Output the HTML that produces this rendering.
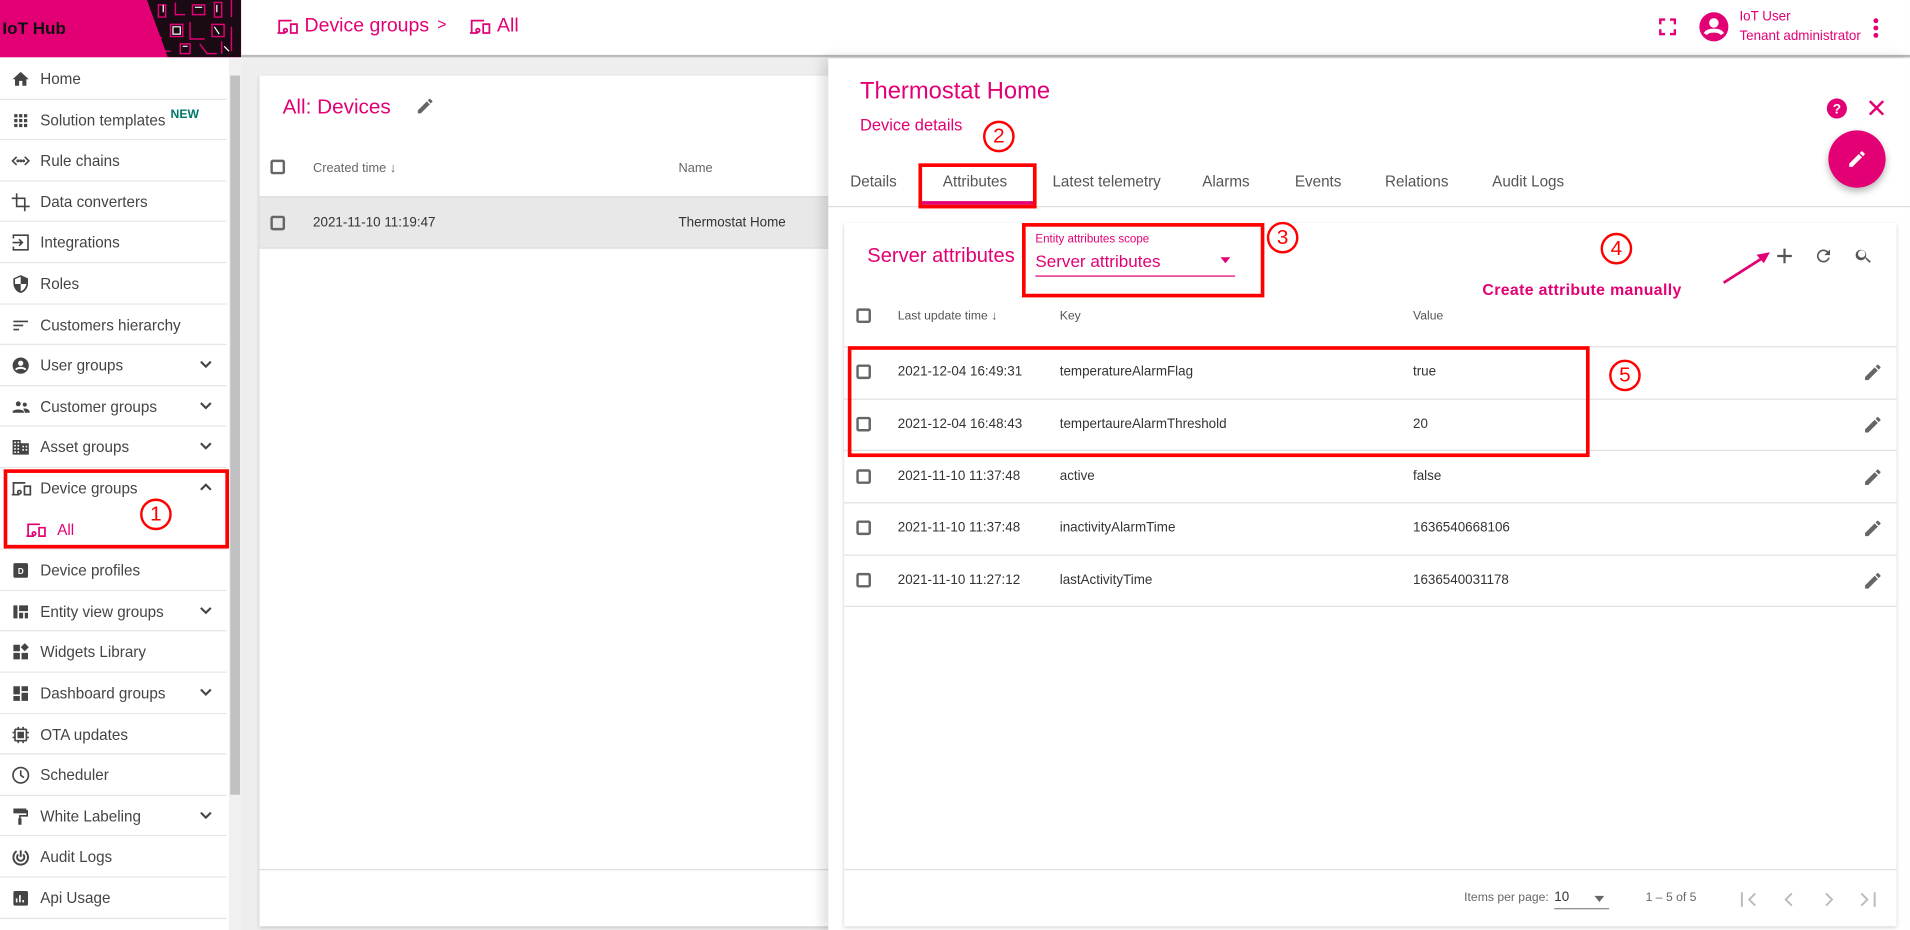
<!DOCTYPE html>
<html><head><meta charset="utf-8"><style>
*{box-sizing:border-box;margin:0;padding:0}
html,body{width:1910px;height:930px;overflow:hidden;background:#fff}
#w{width:1568px;height:763px;transform:scale(1.2181,1.2189);transform-origin:0 0;position:relative;font-family:"Liberation Sans",sans-serif;color:#333;background:#eee}
.a{position:absolute;white-space:nowrap}
.pk{color:#e20074}
.mi{position:absolute;left:0;width:186px;height:33.6px;border-bottom:1px solid #e4e4e4;background:#fff;font-size:12.5px;color:#444}
.mi span{position:absolute;left:33px;top:10px}
.mi svg{position:absolute;left:9px;top:9px}
.mi .chev{position:absolute;left:162px;top:9px}
.tb{font-size:12.5px;color:#555;position:absolute;top:142px}
.rl{position:absolute;left:693px;width:864px;height:1px;background:#e0e0e0}
.cb{position:absolute;width:12px;height:12px;border:2px solid #666;border-radius:2px}
.rt{position:absolute;font-size:11px;color:#333}
.rb{position:absolute;border:3px solid #f00}
.cir{position:absolute;width:26px;height:26px;border:2.5px solid #f00;border-radius:50%;color:#f00;font-size:17px;text-align:center;line-height:21px}
</style></head><body><div id="w">
<!-- sidebar -->
<div class="a" style="left:0;top:0;width:198px;height:763px;background:#fff"></div>
<div class="a" style="left:0;top:0;width:198px;height:47px;background:#e20074;overflow:hidden">
<div class="a" style="left:112px;top:0;width:86px;height:47px;background:#1a0a14;clip-path:polygon(10% 0,100% 0,100% 100%,30% 100%,22% 60%)"></div>
<svg class="a" style="left:120px;top:0" width="78" height="47"><g stroke="#e20074" fill="none" stroke-width="1.2"><path d="M10 4h6v10h-6zM24 2v10h8M38 4h10v8H38zM56 2h6v12h-6zM70 0v14M20 20h10v10H20zM36 18v14h12M54 20h10v10H54zM12 30v12h8M28 36h8v8h-8zM44 36l6 8h8M62 34v10M70 22v20"/></g><g stroke="#fff" fill="none" stroke-width="1"><path d="M14 4v6M40 6h6M58 4v6M22 22h6v6h-6zM56 22l4 6M30 38h4M64 38l4 4"/></g></svg>
<div class="a" style="left:2px;top:15px;font-size:14px;font-weight:bold;color:#111">IoT Hub</div></div>
<div class="a" style="left:188px;top:48px;width:10px;height:715px;background:#f0f0f0"></div>
<div class="a" style="left:189px;top:62px;width:8px;height:590px;background:#c1c1c1"></div>
<div class="a" style="left:198px;top:48px;width:14px;height:715px;background:#eee"></div>

<div class="mi" style="top:48px"><svg width="16" height="16" viewBox="0 0 24 24"><path d="M10 20v-6h4v6h5v-8h3L12 3 2 12h3v8z" fill="#444"/></svg><span>Home</span></div>
<div class="mi" style="top:81.6px"><svg width="16" height="16" viewBox="0 0 24 24" fill="#444"><path d="M4 4h4v4H4zM10 4h4v4h-4zM16 4h4v4h-4zM4 10h4v4H4zM10 10h4v4h-4zM16 10h4v4h-4zM4 16h4v4H4zM10 16h4v4h-4zM16 16h4v4h-4z"/></svg><span>Solution templates</span><b class="a" style="left:140px;top:7px;font-size:10px;color:#00796b">NEW</b></div>
<div class="mi" style="top:115.2px"><svg width="16" height="16" viewBox="0 0 24 24" fill="none" stroke="#444" stroke-width="2"><path d="M7 7l-5 5 5 5M17 7l5 5-5 5"/><circle cx="8.5" cy="12" r=".8"/><circle cx="12" cy="12" r=".8"/><circle cx="15.5" cy="12" r=".8"/></svg><span>Rule chains</span></div>
<div class="mi" style="top:148.8px"><svg width="16" height="16" viewBox="0 0 24 24" fill="none" stroke="#444" stroke-width="2"><path d="M7 1v16h16M1 7h16v16"/></svg><span>Data converters</span></div>
<div class="mi" style="top:182.4px"><svg width="16" height="16" viewBox="0 0 24 24" fill="none" stroke="#444" stroke-width="2"><path d="M3 7V3h18v18H3v-4M2 12h12M10 8l4 4-4 4"/></svg><span>Integrations</span></div>
<div class="mi" style="top:216px"><svg width="16" height="16" viewBox="0 0 24 24"><path d="M12 1L3 5v6c0 6 4 11 9 12 5-1 9-6 9-12V5z" fill="#444"/><path d="M12 3v9H5V6zM12 12h7c-1 5-4 8-7 9z" fill="#fff"/></svg><span>Roles</span></div>
<div class="mi" style="top:249.6px"><svg width="16" height="16" viewBox="0 0 24 24" fill="#444"><path d="M3 6h18v2H3zM3 11h12v2H3zM3 16h7v2H3z"/></svg><span>Customers hierarchy</span></div>
<div class="mi" style="top:283.2px"><svg width="16" height="16" viewBox="0 0 24 24"><circle cx="12" cy="12" r="10" fill="#444"/><circle cx="12" cy="9" r="3.2" fill="#fff"/><path d="M6 17c2-3 10-3 12 0" stroke="#fff" stroke-width="2.4" fill="none"/></svg><span>User groups</span><svg class="chev" width="14" height="14" viewBox="0 0 24 24"><path d="M5 8l7 7 7-7" stroke="#444" stroke-width="3" fill="none"/></svg></div>
<div class="mi" style="top:316.8px"><svg width="16" height="16" viewBox="0 0 24 24" fill="#444"><circle cx="9" cy="8" r="3"/><circle cx="17" cy="9" r="2.5"/><path d="M2 18c0-4 14-4 14 0v1H2zM15 14c4-1 8 1 8 4v1h-6c0-2-1-4-2-5z"/></svg><span>Customer groups</span><svg class="chev" width="14" height="14" viewBox="0 0 24 24"><path d="M5 8l7 7 7-7" stroke="#444" stroke-width="3" fill="none"/></svg></div>
<div class="mi" style="top:350.4px"><svg width="16" height="16" viewBox="0 0 24 24" fill="#444"><path d="M2 21V3h10v4h10v14zM4 5v2h2V5zM8 5v2h2V5zM4 9v2h2V9zM8 9v2h2V9zM14 10v2h2v-2zM18 10v2h2v-2zM14 14v2h2v-2zM18 14v2h2v-2zM4 13v2h2v-2zM8 13v2h2v-2zM4 17v2h2v-2zM8 17v2h2v-2z" fill-rule="evenodd"/></svg><span>Asset groups</span><svg class="chev" width="14" height="14" viewBox="0 0 24 24"><path d="M5 8l7 7 7-7" stroke="#444" stroke-width="3" fill="none"/></svg></div>
<div class="mi" style="top:384px;height:67.2px"><svg width="18" height="16" viewBox="0 0 26 22" fill="none" stroke="#444" stroke-width="2"><path d="M3 18V4h14M1 18h9M16 8h7v10h-7z"/><circle cx="10" cy="15" r="2"/></svg><span>Device groups</span><svg class="chev" width="14" height="14" viewBox="0 0 24 24"><path d="M5 15l7-7 7 7" stroke="#444" stroke-width="3" fill="none"/></svg>
<svg class="a" style="left:21px;top:43px" width="18" height="16" viewBox="0 0 26 22" fill="none" stroke="#e20074" stroke-width="2"><path d="M3 18V4h14M1 18h9M16 8h7v10h-7z"/><circle cx="10" cy="15" r="2"/></svg><span class="pk" style="left:47px;top:44px">All</span></div>
<div class="mi" style="top:451.2px"><svg width="16" height="16" viewBox="0 0 24 24"><rect x="3" y="3" width="18" height="18" rx="2" fill="#444"/><text x="8.5" y="16.5" font-size="10" font-weight="bold" fill="#fff" font-family="Liberation Sans">D</text></svg><span>Device profiles</span></div>
<div class="mi" style="top:484.8px"><svg width="16" height="16" viewBox="0 0 24 24" fill="#444"><path d="M3 4h5v16H3zM10 4h11v7H10zM10 13h5v7h-5zM17 13h4v7h-4z"/></svg><span>Entity view groups</span><svg class="chev" width="14" height="14" viewBox="0 0 24 24"><path d="M5 8l7 7 7-7" stroke="#444" stroke-width="3" fill="none"/></svg></div>
<div class="mi" style="top:518.4px"><svg width="16" height="16" viewBox="0 0 24 24" fill="#444"><path d="M3 3h8v8H3zM3 13h8v8H3zM13 13h8v8h-8zM17 1l5 5-5 5-5-5z"/></svg><span>Widgets Library</span></div>
<div class="mi" style="top:552px"><svg width="16" height="16" viewBox="0 0 24 24" fill="#444"><path d="M3 3h8v10H3zM3 15h8v6H3zM13 3h8v6h-8zM13 11h8v10h-8z"/></svg><span>Dashboard groups</span><svg class="chev" width="14" height="14" viewBox="0 0 24 24"><path d="M5 8l7 7 7-7" stroke="#444" stroke-width="3" fill="none"/></svg></div>
<div class="mi" style="top:585.6px"><svg width="16" height="16" viewBox="0 0 24 24" fill="none" stroke="#444" stroke-width="2"><rect x="5" y="5" width="14" height="14" rx="1"/><rect x="9" y="9" width="6" height="6" fill="#444"/><path d="M2 9h3M2 15h3M19 9h3M19 15h3M9 2v3M15 2v3M9 19v3M15 19v3"/></svg><span>OTA updates</span></div>
<div class="mi" style="top:619.2px"><svg width="16" height="16" viewBox="0 0 24 24" fill="none" stroke="#444" stroke-width="2"><circle cx="12" cy="12" r="9.5"/><path d="M12 6v6l4 3"/></svg><span>Scheduler</span></div>
<div class="mi" style="top:652.8px"><svg width="16" height="16" viewBox="0 0 24 24" fill="#444"><path d="M3 2h16v6H3zM19 4h2v8h-9v3h-2v-5h9z"/><path d="M9 14h4v8H9z"/></svg><span>White Labeling</span><svg class="chev" width="14" height="14" viewBox="0 0 24 24"><path d="M5 8l7 7 7-7" stroke="#444" stroke-width="3" fill="none"/></svg></div>
<div class="mi" style="top:686.4px"><svg width="16" height="16" viewBox="0 0 24 24" fill="none" stroke="#444" stroke-width="2.4"><path d="M7 5A9 9 0 1 0 17 5"/><path d="M9 9a4.5 4.5 0 1 0 6 0"/><path d="M12 4v8"/></svg><span>Audit Logs</span></div>
<div class="mi" style="top:720px"><svg width="16" height="16" viewBox="0 0 24 24"><rect x="3" y="3" width="18" height="18" rx="2" fill="#444"/><path d="M7 17v-5M11 17V8M15 17v-3" stroke="#fff" stroke-width="2"/></svg><span>Api Usage</span></div>

<!-- top bar -->
<div class="a" style="left:198px;top:0;width:1370px;height:47px;background:#fff;border-bottom:2px solid #bbb"></div>
<svg class="a" style="left:227px;top:14px" width="19" height="16" viewBox="0 0 26 22" fill="none" stroke="#e20074" stroke-width="2"><path d="M3 18V4h14M1 18h9M16 8h7v10h-7z"/><circle cx="10" cy="15" r="2"/></svg>
<div class="a pk" style="left:250px;top:13px;font-size:16px">Device groups</div>
<div class="a pk" style="left:359px;top:12px;font-size:13px">&gt;</div>
<svg class="a" style="left:385px;top:14px" width="19" height="16" viewBox="0 0 26 22" fill="none" stroke="#e20074" stroke-width="2"><path d="M3 18V4h14M1 18h9M16 8h7v10h-7z"/><circle cx="10" cy="15" r="2"/></svg>
<div class="a pk" style="left:408px;top:13px;font-size:16px">All</div>
<svg class="a" style="left:1362px;top:15px" width="14" height="14" viewBox="0 0 14 14" fill="none" stroke="#e20074" stroke-width="2"><path d="M1 5V1h4M9 1h4v4M13 9v4H9M5 13H1V9"/></svg>
<svg class="a" style="left:1394px;top:9px" width="26" height="26" viewBox="0 0 24 24"><circle cx="12" cy="12" r="11" fill="#e20074"/><circle cx="12" cy="9" r="3.6" fill="#fff"/><path d="M5.5 17.5c2-3.5 11-3.5 13 0" stroke="#fff" stroke-width="3" fill="none"/></svg>
<div class="a pk" style="left:1428px;top:8px;font-size:11px">IoT User</div>
<div class="a pk" style="left:1428px;top:24px;font-size:11px">Tenant administrator</div>
<svg class="a" style="left:1536px;top:14px" width="8" height="18"><circle cx="4" cy="3" r="2" fill="#e20074"/><circle cx="4" cy="9" r="2" fill="#e20074"/><circle cx="4" cy="15" r="2" fill="#e20074"/></svg>

<!-- left card -->
<div class="a" style="left:213px;top:62px;width:480px;height:698px;background:#fff;box-shadow:0 1px 3px rgba(0,0,0,.2)"></div>
<div class="a pk" style="left:232px;top:78px;font-size:17px">All: Devices</div>
<svg class="a" style="left:341px;top:79px" width="16" height="16" viewBox="0 0 24 24"><path d="M3 17.3V21h3.7L17.8 9.9l-3.7-3.7zM20.7 7c.4-.4.4-1 0-1.4l-2.3-2.3c-.4-.4-1-.4-1.4 0l-1.8 1.8 3.7 3.7z" fill="#666"/></svg>
<div class="cb" style="left:222px;top:131px"></div>
<div class="a" style="left:257px;top:132px;font-size:10.5px;color:#666">Created time &#8595;</div>
<div class="a" style="left:557px;top:132px;font-size:10.5px;color:#666">Name</div>
<div class="a" style="left:213px;top:161px;width:467px;height:43px;background:#e8e8e8;border-top:1px solid #ddd;border-bottom:1px solid #ddd"></div>
<div class="cb" style="left:222px;top:177px"></div>
<div class="a" style="left:257px;top:177px;font-size:11px">2021-11-10 11:19:47</div>
<div class="a" style="left:557px;top:177px;font-size:11px">Thermostat Home</div>
<div class="a" style="left:213px;top:713px;width:467px;height:1px;background:#ddd"></div>

<!-- right panel -->
<div class="a" style="left:680px;top:48px;width:888px;height:715px;background:#fff;box-shadow:-4px 0 10px rgba(0,0,0,.15)"></div>
<div class="a pk" style="left:706px;top:64px;font-size:19.5px">Thermostat Home</div>
<div class="a pk" style="left:706px;top:95px;font-size:13.5px">Device details</div>
<svg class="a" style="left:1499px;top:80px" width="18" height="18" viewBox="0 0 24 24"><circle cx="12" cy="12" r="11" fill="#e20074"/><text x="7.5" y="17.5" font-size="15" font-weight="bold" fill="#fff" font-family="Liberation Sans">?</text></svg>
<svg class="a" style="left:1534px;top:82px" width="13" height="13" viewBox="0 0 13 13"><path d="M1 1l11 11M12 1L1 12" stroke="#e20074" stroke-width="2"/></svg>
<div class="a" style="left:1501px;top:107px;width:47px;height:47px;border-radius:50%;background:#e20074;box-shadow:0 3px 6px rgba(0,0,0,.3)"></div>
<svg class="a" style="left:1516px;top:122px" width="17" height="17" viewBox="0 0 24 24"><path d="M3 17.3V21h3.7L17.8 9.9l-3.7-3.7zM20.7 7c.4-.4.4-1 0-1.4l-2.3-2.3c-.4-.4-1-.4-1.4 0l-1.8 1.8 3.7 3.7z" fill="#fff"/></svg>
<div class="tb" style="left:698px">Details</div>
<div class="tb" style="left:774px">Attributes</div>
<div class="tb" style="left:864px">Latest telemetry</div>
<div class="tb" style="left:987px">Alarms</div>
<div class="tb" style="left:1063px">Events</div>
<div class="tb" style="left:1137px">Relations</div>
<div class="tb" style="left:1225px">Audit Logs</div>
<div class="a" style="left:680px;top:169px;width:888px;height:1px;background:#ddd"></div>
<div class="a" style="left:756px;top:165px;width:93px;height:3px;background:#e20074"></div>

<div class="a" style="left:693px;top:183px;width:864px;height:577px;background:#fff;box-shadow:0 1px 3px rgba(0,0,0,.2)"></div>
<div class="a pk" style="left:712px;top:201px;font-size:16.5px">Server attributes</div>
<div class="a pk" style="left:850px;top:191px;font-size:9.5px">Entity attributes scope</div>
<div class="a pk" style="left:850px;top:206px;font-size:14px">Server attributes</div>
<div class="a" style="left:1002px;top:211px;border-left:4px solid transparent;border-right:4px solid transparent;border-top:5px solid #e20074"></div>
<div class="a" style="left:850px;top:226px;width:164px;height:1px;background:#e20074"></div>
<svg class="a" style="left:1458px;top:203px" width="14" height="14"><path d="M7 1v12M1 7h12" stroke="#555" stroke-width="1.8"/></svg>
<svg class="a" style="left:1489px;top:202px" width="16" height="16" viewBox="0 0 24 24"><path d="M17.6 6.4A8 8 0 1 0 19.7 14h-2.1a6 6 0 1 1-1.4-6.2L13 11h7V4z" fill="#555"/></svg>
<svg class="a" style="left:1522px;top:202px" width="16" height="16" viewBox="0 0 24 24"><path d="M15.5 14h-.8l-.3-.3A6.5 6.5 0 1 0 14 14.4l.3.3v.8l5 5 1.5-1.5zm-6 0a4.5 4.5 0 1 1 0-9 4.5 4.5 0 0 1 0 9z" fill="#555"/></svg>

<div class="cb" style="left:703px;top:253px"></div>
<div class="a" style="left:737px;top:254px;font-size:10px;color:#555">Last update time &#8595;</div>
<div class="a" style="left:870px;top:254px;font-size:10px;color:#555">Key</div>
<div class="a" style="left:1160px;top:254px;font-size:10px;color:#555">Value</div>
<div class="rl" style="top:284px"></div><div class="rl" style="top:327px"></div><div class="rl" style="top:369px"></div><div class="rl" style="top:412px"></div><div class="rl" style="top:455px"></div><div class="rl" style="top:497px"></div>

<div class="cb" style="left:703px;top:299px"></div><div class="rt" style="left:737px;top:299px">2021-12-04 16:49:31</div><div class="rt" style="left:870px;top:299px">temperatureAlarmFlag</div><div class="rt" style="left:1160px;top:299px">true</div>
<div class="cb" style="left:703px;top:342px"></div><div class="rt" style="left:737px;top:342px">2021-12-04 16:48:43</div><div class="rt" style="left:870px;top:342px">tempertaureAlarmThreshold</div><div class="rt" style="left:1160px;top:342px">20</div>
<div class="cb" style="left:703px;top:385px"></div><div class="rt" style="left:737px;top:385px">2021-11-10 11:37:48</div><div class="rt" style="left:870px;top:385px">active</div><div class="rt" style="left:1160px;top:385px">false</div>
<div class="cb" style="left:703px;top:427px"></div><div class="rt" style="left:737px;top:427px">2021-11-10 11:37:48</div><div class="rt" style="left:870px;top:427px">inactivityAlarmTime</div><div class="rt" style="left:1160px;top:427px">1636540668106</div>
<div class="cb" style="left:703px;top:470px"></div><div class="rt" style="left:737px;top:470px">2021-11-10 11:27:12</div><div class="rt" style="left:870px;top:470px">lastActivityTime</div><div class="rt" style="left:1160px;top:470px">1636540031178</div>
<svg class="a" style="left:1529px;top:297px" width="17" height="17" viewBox="0 0 24 24"><path d="M3 17.3V21h3.7L17.8 9.9l-3.7-3.7zM20.7 7c.4-.4.4-1 0-1.4l-2.3-2.3c-.4-.4-1-.4-1.4 0l-1.8 1.8 3.7 3.7z" fill="#666"/></svg>
<svg class="a" style="left:1529px;top:340px" width="17" height="17" viewBox="0 0 24 24"><path d="M3 17.3V21h3.7L17.8 9.9l-3.7-3.7zM20.7 7c.4-.4.4-1 0-1.4l-2.3-2.3c-.4-.4-1-.4-1.4 0l-1.8 1.8 3.7 3.7z" fill="#666"/></svg>
<svg class="a" style="left:1529px;top:383px" width="17" height="17" viewBox="0 0 24 24"><path d="M3 17.3V21h3.7L17.8 9.9l-3.7-3.7zM20.7 7c.4-.4.4-1 0-1.4l-2.3-2.3c-.4-.4-1-.4-1.4 0l-1.8 1.8 3.7 3.7z" fill="#666"/></svg>
<svg class="a" style="left:1529px;top:425px" width="17" height="17" viewBox="0 0 24 24"><path d="M3 17.3V21h3.7L17.8 9.9l-3.7-3.7zM20.7 7c.4-.4.4-1 0-1.4l-2.3-2.3c-.4-.4-1-.4-1.4 0l-1.8 1.8 3.7 3.7z" fill="#666"/></svg>
<svg class="a" style="left:1529px;top:468px" width="17" height="17" viewBox="0 0 24 24"><path d="M3 17.3V21h3.7L17.8 9.9l-3.7-3.7zM20.7 7c.4-.4.4-1 0-1.4l-2.3-2.3c-.4-.4-1-.4-1.4 0l-1.8 1.8 3.7 3.7z" fill="#666"/></svg>

<div class="a" style="left:693px;top:713px;width:864px;height:1px;background:#e0e0e0"></div>
<div class="a" style="left:1202px;top:731px;font-size:10px;color:#666">Items per page:</div>
<div class="a" style="left:1276px;top:730px;font-size:11px;color:#333">10</div>
<div class="a" style="left:1309px;top:735px;border-left:4px solid transparent;border-right:4px solid transparent;border-top:5px solid #666"></div>
<div class="a" style="left:1276px;top:745px;width:45px;height:1px;background:#888"></div>
<div class="a" style="left:1351px;top:731px;font-size:10px;color:#666">1 – 5 of 5</div>
<svg class="a" style="left:1428px;top:730px" width="120" height="16" fill="none" stroke="#bbb" stroke-width="1.6"><path d="M2 2v12M13 3l-5 5 5 5M43 3l-5 5 5 5M71 3l5 5-5 5M100 3l5 5-5 5M111 2v12"/></svg>

<!-- annotations -->
<div class="rb" style="left:3px;top:385px;width:185px;height:65px"></div>
<div class="cir" style="left:115px;top:409px">1</div>
<div class="rb" style="left:754px;top:134px;width:97px;height:37px"></div>
<div class="cir" style="left:807px;top:99px">2</div>
<div class="rb" style="left:839px;top:183px;width:199px;height:61px"></div>
<div class="cir" style="left:1040px;top:182px">3</div>
<div class="cir" style="left:1314px;top:191px">4</div>
<div class="rb" style="left:696px;top:284px;width:609px;height:91px"></div>
<div class="cir" style="left:1321px;top:295px">5</div>
<div class="a pk" style="left:1217px;top:230px;font-size:13px;font-weight:bold;letter-spacing:.3px">Create attribute manually</div>
<svg class="a" style="left:1412px;top:203px" width="44" height="32"><path d="M3 29L36 8" stroke="#e20074" stroke-width="2.2"/><path d="M41 4l-11 2 6 7z" fill="#e20074"/></svg>
</div></body></html>
